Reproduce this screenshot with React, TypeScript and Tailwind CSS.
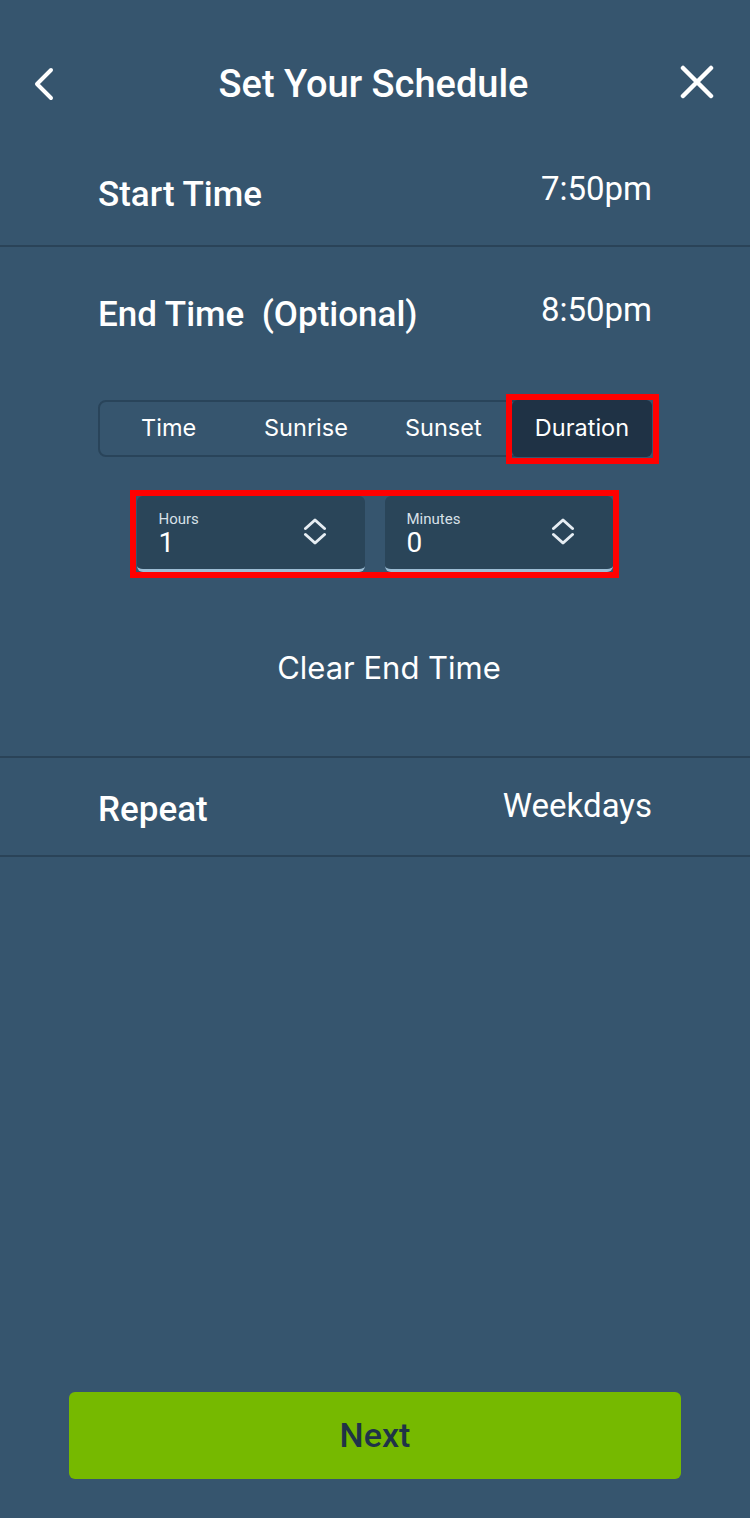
import { useState } from 'react';

const roboto = { fontFamily: 'Roboto, "Noto Sans", sans-serif' };
const inter = { fontFamily: 'Inter, "Noto Sans", sans-serif' };

function Chevrons() {
  return (
    <svg width="24" height="27" viewBox="0 0 24 27" fill="none" stroke="#e6edf3" strokeWidth="3" strokeLinecap="round" strokeLinejoin="round">
      <path d="M2.5 10.5 L12 2 L21.5 10.5" />
      <path d="M2.5 16.5 L12 25 L21.5 16.5" />
    </svg>
  );
}

function Stepper({ label, value }: { label: string; value: string }) {
  return (
    <div className="flex h-[76px] w-[228px] items-center justify-between rounded-md border-b-[3px] border-[#9dbdd4] bg-[#2a4559] pb-[2px] pl-[22px] pr-[38px]">
      <div className="flex flex-col pt-[5px]">
        <span className="text-[15px] leading-[18px] text-[#d8e0e8]">{label}</span>
        <span className="text-[28px] leading-[30px] text-white">{value}</span>
      </div>
      <Chevrons />
    </div>
  );
}

export default function App() {
  const [mode, setMode] = useState('Duration');
  const tabs = ['Time', 'Sunrise', 'Sunset', 'Duration'];

  return (
    <div className="flex min-h-[1518px] w-[750px] flex-col bg-[#36556e] text-white" style={roboto}>
      <header className="flex h-[175px] items-start justify-between pl-[33px] pr-[36px] pt-[62px]">
        <svg width="22" height="34" viewBox="0 0 22 34" fill="none" stroke="white" strokeWidth="4" strokeLinecap="round" strokeLinejoin="round" className="mt-[5px]">
          <path d="M18 3 L4 17 L18 31" />
        </svg>
        <h1 className="ml-[12px] text-[38px] font-medium leading-[44px]">Set Your Schedule</h1>
        <svg width="34" height="34" viewBox="0 0 34 34" fill="none" stroke="white" strokeWidth="4.5" strokeLinecap="round" className="mt-[3px]">
          <path d="M3 3 L31 31 M31 3 L3 31" />
        </svg>
      </header>

      <div className="flex h-[70px] items-start justify-between px-[98px]">
        <span className="text-[35px] font-medium leading-[40px]">Start Time</span>
        <span className="-mt-[6px] text-[33px] leading-[40px]">7:50pm</span>
      </div>

      <div className="border-t-2 border-[#2a4358]">
        <div className="flex items-start justify-between px-[98px] pt-[48px]">
          <span className="text-[35px] font-medium leading-[40px]">
            End Time&nbsp;&nbsp;(Optional)
          </span>
          <span className="-mt-[5px] text-[33px] leading-[40px]">8:50pm</span>
        </div>

        <div className="mt-[65px] flex pl-[98px]">
          <div className="relative flex h-[57px] w-[554px] items-stretch rounded-lg border-2 border-[#29445a]" style={inter}>
            {tabs.map((t) => (
              <button
                key={t}
                type="button"
                onClick={() => setMode(t)}
                className={
                  mode === t
                    ? '-my-[2px] -mr-[2px] flex w-[140px] items-center justify-center rounded-md bg-[#1f3245] pb-[2px] text-[23.5px] text-white'
                    : 'flex flex-1 items-center justify-center pb-[2px] text-[23.5px] text-white'
                }
              >
                {t}
              </button>
            ))}
            <div className="pointer-events-none absolute -right-[9px] -top-[8px] h-[70px] w-[153px] border-[6px] border-[#ff0000]" />
          </div>
        </div>

        <div className="mt-[39px] flex justify-center">
          <div className="relative -ml-[1px] flex gap-[20px]">
            <Stepper label="Hours" value="1" />
            <Stepper label="Minutes" value="0" />
            <div className="pointer-events-none absolute -bottom-[6px] -left-[7px] -right-[6px] -top-[6px] border-[6px] border-[#ff0000]" />
          </div>
        </div>

        <div className="flex h-[184px] items-start justify-center pt-[76px]">
          <span className="ml-[28px] text-[31px] leading-[40px]" style={inter}>Clear End Time</span>
        </div>
      </div>

      <div className="flex h-[101px] items-start justify-between border-y-2 border-[#2a4358] px-[98px] pt-[32px]">
        <span className="text-[35px] font-medium leading-[40px]">Repeat</span>
        <span className="-mt-[4px] text-[33px] leading-[40px]">Weekdays</span>
      </div>

      <div className="flex-1" />

      <div className="flex justify-center pb-[39px]">
        <button type="button" className="flex h-[87px] w-[612px] items-center justify-center rounded-md bg-[#76b900] text-[34px] font-medium text-[#1f3347]">
          Next
        </button>
      </div>
    </div>
  );
}
